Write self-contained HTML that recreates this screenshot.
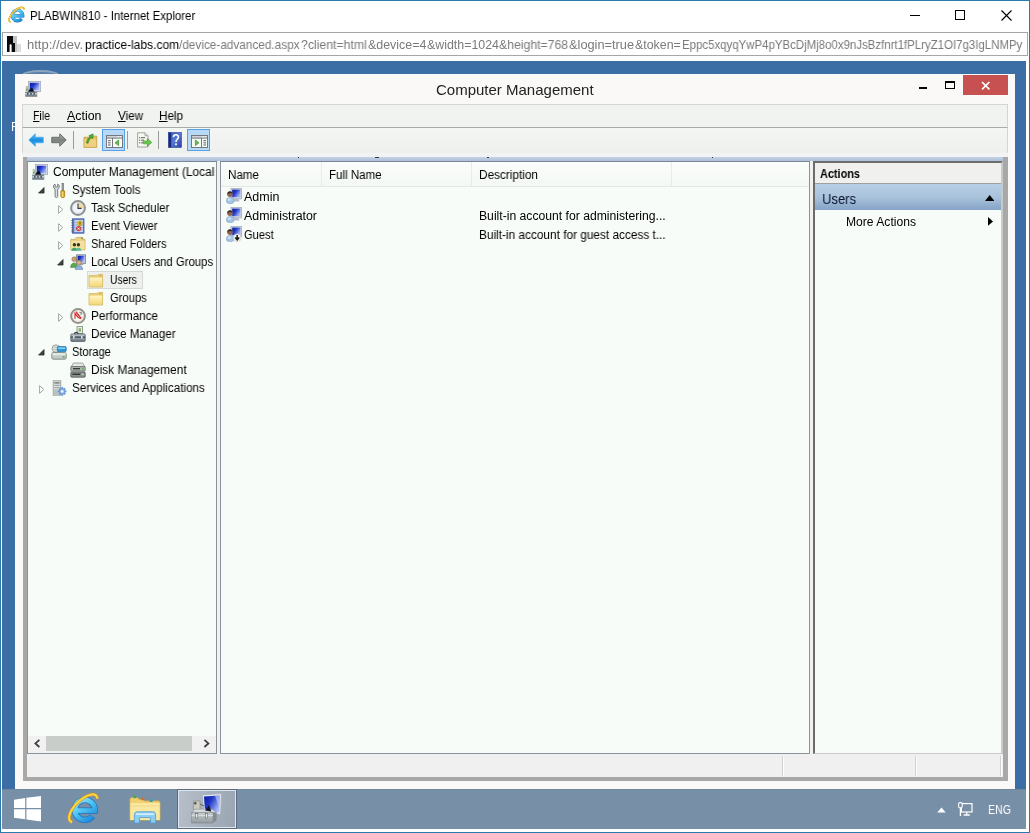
<!DOCTYPE html>
<html lang="en">
<head>
<meta charset="utf-8">
<title>PLABWIN810 - Internet Explorer</title>
<style>
*{box-sizing:border-box;margin:0;padding:0}
html,body{width:1030px;height:833px;overflow:hidden;background:#fff}
body{position:relative;font-family:"Liberation Sans",sans-serif;font-size:12px;color:#000}
.abs{position:absolute;display:block}
.t{position:absolute;white-space:nowrap;line-height:16px;height:16px;transform-origin:0 50%;will-change:transform}
</style>
</head>
<body>
<svg width="0" height="0" style="position:absolute"><defs><linearGradient id="gscr" x1="0" y1="0" x2="1" y2="0.6"><stop offset="0" stop-color="#0a1a9c"/><stop offset="0.45" stop-color="#2038c8"/><stop offset="1" stop-color="#a8b8f8"/></linearGradient>
<linearGradient id="gfold" x1="0" y1="0" x2="0" y2="1"><stop offset="0" stop-color="#fff4c4"/><stop offset="1" stop-color="#f4d878"/></linearGradient>
<linearGradient id="gback" x1="0" y1="0" x2="0" y2="1"><stop offset="0" stop-color="#6cc0f4"/><stop offset="0.5" stop-color="#1c8ee0"/><stop offset="1" stop-color="#3aa8ee"/></linearGradient>
<linearGradient id="gfwd" x1="0" y1="0" x2="0" y2="1"><stop offset="0" stop-color="#b4b8b4"/><stop offset="0.5" stop-color="#7c807c"/><stop offset="1" stop-color="#a0a4a0"/></linearGradient>
<linearGradient id="gbox" x1="0" y1="0" x2="0" y2="1"><stop offset="0" stop-color="#c8d0d4"/><stop offset="1" stop-color="#6c7880"/></linearGradient>
<linearGradient id="gbox2" x1="0" y1="0" x2="0" y2="1"><stop offset="0" stop-color="#c8ced2"/><stop offset="1" stop-color="#949ca0"/></linearGradient>
<linearGradient id="ghelp" x1="0" y1="0" x2="1" y2="1"><stop offset="0" stop-color="#3858c0"/><stop offset="0.5" stop-color="#5878d4"/><stop offset="1" stop-color="#2840a0"/></linearGradient>
<radialGradient id="gie" cx="0.4" cy="0.35" r="0.8"><stop offset="0" stop-color="#7fe0ff"/><stop offset="0.6" stop-color="#1fa0e8"/><stop offset="1" stop-color="#1070c0"/></radialGradient>
<linearGradient id="gie2" gradientUnits="userSpaceOnUse" x1="8" y1="6" x2="26" y2="30"><stop offset="0" stop-color="#a0f0ff"/><stop offset="0.5" stop-color="#48c0f0"/><stop offset="1" stop-color="#1880d8"/></linearGradient>
<linearGradient id="gusers" x1="0" y1="0" x2="0" y2="1"><stop offset="0" stop-color="#b8d0e8"/><stop offset="0.5" stop-color="#a0bcdc"/><stop offset="1" stop-color="#80a0c8"/></linearGradient></defs></svg>
<div class="abs" style="left:0px;top:0px;width:1030px;height:833px;border:1px solid #2b7aae"></div>
<svg class="abs" style="left:7.6px;top:6.3px" width="17" height="17" viewBox="0 0 32 32"><g fill="none" stroke-linecap="butt">
<path d="M25.6 24.2 A10 10 0 1 1 27.8 18.7 H10" stroke="#1c74c0" stroke-width="6.2"/>
<path d="M25.6 24.2 A10 10 0 1 1 27.8 18.7 H10" stroke="url(#gie2)" stroke-width="4.8"/>
<path d="M5.14 30.22 A18.2 8.0 -44.6 1 1 30.32 6.69" stroke="#d8a020" stroke-width="3.2"/>
<path d="M5.14 30.22 A18.2 8.0 -44.6 1 1 30.32 6.69" stroke="#fcd848" stroke-width="1.8"/>
</g></svg>
<div class="t" style="left:30.4px;top:7.84px;font-size:12px;color:#000;transform:scaleX(0.9526)">PLABWIN810 - Internet Explorer</div>
<div class="abs" style="left:910px;top:15px;width:10px;height:1px;background:#000"></div>
<div class="abs" style="left:955px;top:10px;width:10px;height:10px;border:1px solid #000"></div>
<svg class="abs" style="left:1001px;top:10px" width="11" height="11" viewBox="0 0 11 11"><path d="M0.5 0.5 L10.5 10.5 M10.5 0.5 L0.5 10.5" stroke="#000" stroke-width="1.1"/></svg>
<div class="abs" style="left:2px;top:32px;width:1026px;height:24px;border:1px solid #a6a6a6;background:#fff"></div>
<svg class="abs" style="left:7px;top:36px" width="14" height="16" viewBox="0 0 14 16"><rect x="0" y="0" width="6" height="16" fill="#0a0a0a"/><rect x="6" y="0" width="4" height="16" fill="#c4c4c4"/><rect x="10" y="8" width="4" height="8" fill="#dcdcdc"/>
<rect x="4" y="7" width="4" height="9" fill="#0a0a0a"/><path d="M2.6 16 V9.4 C2.6 8 4.6 8 4.6 9.4 V16z" fill="#fff"/></svg>
<div class="t" style="left:27.4px;top:37.10px;font-size:12.4px;color:#7a7a7a;transform:scaleX(1.0505)">http://dev.</div>
<div class="t" style="left:84.5px;top:37.10px;font-size:12.4px;color:#000;transform:scaleX(0.9692)">practice-labs.com</div>
<div class="t" style="left:179.2px;top:37.10px;font-size:12.4px;color:#7a7a7a;transform:scaleX(0.9515)">/device-advanced.aspx</div>
<div class="t" style="left:301px;top:37.10px;font-size:12.4px;color:#7a7a7a;transform:scaleX(0.9899)">?client=html</div>
<div class="t" style="left:367.6px;top:37.10px;font-size:12.4px;color:#7a7a7a;transform:scaleX(1.0031)">&amp;device=4</div>
<div class="t" style="left:426.6px;top:37.10px;font-size:12.4px;color:#7a7a7a;transform:scaleX(1.0000)">&amp;width=1024</div>
<div class="t" style="left:499.3px;top:37.10px;font-size:12.4px;color:#7a7a7a;transform:scaleX(0.9880)">&amp;height=768</div>
<div class="t" style="left:569.1px;top:37.10px;font-size:12.4px;color:#7a7a7a;transform:scaleX(1.0328)">&amp;login=true</div>
<div class="t" style="left:634.8px;top:37.10px;font-size:12.4px;color:#7a7a7a;transform:scaleX(0.9997)">&amp;token=</div>
<div class="t" style="left:681.7px;top:37.10px;font-size:12.4px;color:#7a7a7a;transform:scaleX(0.9236)">Eppc5xqyqYwP4pYBcDjMj8o0x9nJsBzfnrt1fPLryZ1OI7g3IgLNMPy</div>
<div class="abs" style="left:2px;top:61px;width:1024px;height:728px;background:#3a6ea5"></div>
<div class="abs" style="left:22px;top:69.5px;width:37px;height:10px;border:2px solid #8ea4bc;border-radius:50%;background:#5a7fa8"></div>
<div class="abs" style="left:2px;top:117.5px;width:13px;height:18px;overflow:hidden"><span class="t" style="left:9px;top:1px;color:#fff;font-size:12px">R</span></div>
<div class="abs" style="left:2px;top:789px;width:1024px;height:40px;background:#788fa8;border-top:1px solid #70869e"></div>
<svg class="abs" style="left:13.5px;top:796px" width="27" height="25.5" viewBox="0 0 27 25.4"><path d="M0 3.6 L11.2 2 V12 H0z M12.4 1.8 L27 0 V12 H12.4z M0 13.2 H11.2 V23.2 L0 21.6z M12.4 13.2 H27 V25.4 L12.4 23.4z" fill="#fff"/></svg>
<svg class="abs" style="left:67px;top:792px" width="32" height="32" viewBox="0 0 32 32"><g fill="none" stroke-linecap="butt">
<path d="M25.6 24.2 A10 10 0 1 1 27.8 18.7 H10" stroke="#1c74c0" stroke-width="6.2"/>
<path d="M25.6 24.2 A10 10 0 1 1 27.8 18.7 H10" stroke="url(#gie2)" stroke-width="4.8"/>
<path d="M5.14 30.22 A18.2 8.0 -44.6 1 1 30.32 6.69" stroke="#d8a020" stroke-width="3.2"/>
<path d="M5.14 30.22 A18.2 8.0 -44.6 1 1 30.32 6.69" stroke="#fcd848" stroke-width="1.8"/>
</g></svg>
<svg class="abs" style="left:129px;top:794px" width="32" height="30" viewBox="0 0 32 30"><path d="M1 5.6 C1 4.4 2 3.6 3 3.6 H8.6 L10 5.4 H14 L15.4 7 H29 C30.4 7 31 7.8 31 9 V26 H1z" fill="#f0d070" stroke="#d8b048" stroke-width="0.8"/>
<rect x="4.4" y="1.6" width="3" height="2.6" fill="#48a848"/><rect x="12.4" y="3.6" width="3" height="2.6" fill="#d87028"/><rect x="20.6" y="5.4" width="3" height="2.6" fill="#38a0a8"/>
<path d="M1.4 9 H30.6 V26 H1.4z" fill="#f8e8a0"/>
<path d="M1.4 12 H30.6" stroke="#f0d888" stroke-width="1"/>
<path d="M5.4 29 V20.6 C5.4 18.6 6.6 17.8 8.4 17.8 H23.8 C25.6 17.8 26.6 18.8 26.6 20.6 V29 H21.6 V23.6 H10.4 V29z" fill="#8ccdf2" stroke="#58a0d4" stroke-width="0.9"/>
<path d="M7 19.2 H25 V21 H7z" fill="#d0ecfc"/></svg>
<div class="abs" style="left:178px;top:790px;width:58px;height:38px;background:linear-gradient(100deg,#b6bfca,#a2acb9 70%,#9aa5b3);border:1px solid #dfe5ec;box-shadow:0 0 0 1px #5d6b7d"></div>
<svg class="abs" style="left:191px;top:793px" width="31" height="31" viewBox="0 0 31 31"><path d="M11.4 1.8 L30.6 0.6 L29.6 21.6 L12.6 19.2z" fill="#e0e4ee" stroke="#a4acbc" stroke-width="0.8"/>
<path d="M13 3.4 L29 2.4 L28.2 19.6 L14 17.6z" fill="url(#gscr)"/>
<path d="M24 3 L29 2.6 L28.4 15 z" fill="#c8d4fc" opacity="0.55"/>
<path d="M2.4 8 H9 V16.6 H2.4z" fill="#ccccbc" stroke="#8c8c7c" stroke-width="0.7"/><rect x="3" y="9" width="2.6" height="2.6" rx="1" fill="#505860"/>
<path d="M9 11 L13 13" stroke="#606060" stroke-width="1"/>
<path d="M0.6 19.4 L4.2 16.2 H21 L25.6 19.4z" fill="#dce0e4" stroke="#8c9498" stroke-width="0.6"/>
<path d="M0.6 19.4 H22 V30 H0.6z" fill="url(#gbox2)" stroke="#7c8488" stroke-width="0.6"/>
<path d="M22 19.4 H25.6 V27.2 L22 30z" fill="#848c90"/>
<path d="M0.6 22.6 H22" stroke="#e0e4e8" stroke-width="0.9"/>
<rect x="4.6" y="20.6" width="2.2" height="4.4" fill="#f0f4f4" stroke="#484c50" stroke-width="0.5"/><rect x="14.4" y="20.6" width="2.2" height="4.4" fill="#f0f4f4" stroke="#484c50" stroke-width="0.5"/>
<path d="M14 17.6 L18 12 L20.4 18.4z" fill="#101828"/></svg>
<svg class="abs" style="left:937px;top:806.5px" width="9" height="6" viewBox="0 0 8.4 6"><path d="M0 5.4 L4.2 0.6 L8.4 5.4z" fill="#fff"/></svg>
<svg class="abs" style="left:958px;top:802px" width="16" height="15" viewBox="0 0 16 15"><rect x="3.4" y="1.6" width="10.6" height="8.4" fill="none" stroke="#fff" stroke-width="1.2"/>
<path d="M5.6 13 H11.8 M8.7 10 V13" stroke="#fff" stroke-width="1.3" fill="none"/>
<rect x="0.6" y="0.6" width="3.6" height="5.2" rx="1.4" fill="#778da7" stroke="#fff" stroke-width="1.1"/>
<path d="M2.4 5.8 V14" stroke="#fff" stroke-width="1.3"/></svg>
<div class="t" style="left:987.8px;top:802.34px;font-size:12px;color:#fff;transform:scaleX(0.8841)">ENG</div>
<div class="abs" style="left:15px;top:74px;width:1000px;height:715px;background:#faf9f8"></div>
<svg class="abs" style="left:25px;top:81px" width="16" height="16" viewBox="0 0 16 16"><rect x="3.4" y="0.5" width="12.2" height="10" fill="#d0d8e4" stroke="#a4acbc" stroke-width="0.8"/>
<rect x="4.8" y="1.8" width="9.4" height="7.4" fill="url(#gscr)"/>
<path d="M3 11 C4 8.4 6 6.4 7.4 7 L9.4 11z" fill="#0c1020"/>
<rect x="0.8" y="5.4" width="2" height="4.4" fill="#789c70"/><rect x="1.2" y="6" width="1" height="1.6" fill="#d8e8d0"/>
<rect x="0.2" y="10.6" width="12" height="5.2" fill="#76848e"/>
<rect x="0.2" y="12" width="12" height="1.5" fill="#ccd4d8"/>
<rect x="2" y="11.8" width="1.6" height="2" fill="#4c5860"/><rect x="5.2" y="11.8" width="1.6" height="2" fill="#4c5860"/><rect x="8.4" y="11.8" width="1.6" height="2" fill="#4c5860"/></svg>
<div class="t" style="left:436.4px;top:81.80px;font-size:15px;color:#222;transform:scaleX(1.0000)">Computer Management</div>
<div class="abs" style="left:919px;top:87px;width:8px;height:2px;background:#000"></div>
<div class="abs" style="left:945px;top:81px;width:10px;height:8px;border:1px solid #000;border-top-width:2px"></div>
<div class="abs" style="left:963px;top:75px;width:45px;height:20px;background:#c75050"></div>
<svg class="abs" style="left:981px;top:80.5px" width="9.4" height="9.4" viewBox="0 0 9.4 9.4"><path d="M1 1 L8.4 8.4 M8.4 1 L1 8.4" stroke="#fff" stroke-width="1.7"/></svg>
<div class="abs" style="left:22px;top:104px;width:986px;height:24px;background:#f0f3f0;border:1px solid #d4d6d4;border-bottom:1px solid #a8aaa8"></div>
<div class="t" style="left:33.4px;top:107.84px;font-size:12px;color:#000;transform:scaleX(0.8788)"><span style="text-decoration:underline;text-underline-offset:0.5px">F</span>ile</div>
<div class="t" style="left:67px;top:107.84px;font-size:12px;color:#000;transform:scaleX(1.0312)"><span style="text-decoration:underline;text-underline-offset:0.5px">A</span>ction</div>
<div class="t" style="left:118px;top:107.84px;font-size:12px;color:#000;transform:scaleX(0.9691)"><span style="text-decoration:underline;text-underline-offset:0.5px">V</span>iew</div>
<div class="t" style="left:159.4px;top:107.84px;font-size:12px;color:#000;transform:scaleX(0.9722)"><span style="text-decoration:underline;text-underline-offset:0.5px">H</span>elp</div>
<div class="abs" style="left:22px;top:128px;width:986px;height:25px;background:linear-gradient(#f4f6f4,#eef0ee);border-left:1px solid #d4d6d4;border-right:1px solid #d4d6d4"></div>
<div class="abs" style="left:22px;top:153px;width:986px;height:4px;background:#f2f3f2"></div>
<svg class="abs" style="left:28px;top:133px" width="16" height="14" viewBox="0 0 16 14"><path d="M0.8 7 L7.2 0.8 V4.3 H15.2 V9.7 H7.2 V13.2z" fill="url(#gback)" stroke="#48b0f0" stroke-width="1" stroke-linejoin="round"/></svg>
<svg class="abs" style="left:51px;top:133px" width="16" height="14" viewBox="0 0 16 14"><path d="M15.2 7 L8.8 0.8 V4.3 H0.8 V9.7 H8.8 V13.2z" fill="url(#gfwd)" stroke="#686c68" stroke-width="1" stroke-linejoin="round"/></svg>
<div class="abs" style="left:73px;top:131px;width:1px;height:18px;background:#9a9c9a"></div>
<svg class="abs" style="left:83px;top:132.6px" width="15" height="16" viewBox="0 0 16 16"><path d="M1 4 H9.4 L10.4 2.8 H14.6 V14.8 H1z" fill="#e4c060" stroke="#b89838" stroke-width="0.8"/>
<path d="M1.6 6.2 H14 V14.2 H1.6z" fill="#f0d080"/>
<path d="M3.6 10 C4.4 6 6.4 4 7.6 3.6 L6.2 2.4 L10.8 0.4 L10.4 5.4 L9 4.6 C7.6 5.4 6 7.4 5.4 10.4z" fill="#48b038" stroke="#287818" stroke-width="0.6"/></svg>
<div class="abs" style="left:102px;top:129px;width:23px;height:22px;background:#b8d8f8;border:1px solid #58a0e8"></div>
<svg class="abs" style="left:105.5px;top:134.8px" width="17" height="13" viewBox="0 0 17 13"><rect x="0.5" y="0.5" width="16" height="12" fill="#f8fcf8" stroke="#74787c"/>
<rect x="0.5" y="0.5" width="16" height="2.6" fill="#d0d4d8" stroke="#74787c"/>
<rect x="11.4" y="1.3" width="1.4" height="1" fill="#f8fcf8"/><rect x="13.8" y="1.3" width="1.4" height="1" fill="#f8fcf8"/>
<path d="M6.5 3 V12.5" stroke="#74787c"/>
<rect x="2" y="5" width="2.6" height="1.2" fill="#74787c"/><rect x="2" y="7.2" width="2.6" height="1.2" fill="#74787c"/><rect x="2" y="9.4" width="2.6" height="1.2" fill="#74787c"/>
<path d="M9 7.8 L12.6 5 V10.6z" fill="#70b858" stroke="#489830" stroke-width="0.8"/></svg>
<div class="abs" style="left:127px;top:131px;width:1px;height:18px;background:#9a9c9a"></div>
<svg class="abs" style="left:136px;top:132px" width="16" height="16" viewBox="0 0 16 16"><path d="M1.6 0.8 H9 L12 3.8 V15 H1.6z" fill="#f8f8f0" stroke="#8c9088" stroke-width="0.8"/>
<path d="M9 0.8 V3.8 H12" fill="#d8dcd4" stroke="#8c9088" stroke-width="0.7"/>
<g fill="#707870"><rect x="3" y="5" width="1.2" height="1.2"/><rect x="5" y="5" width="4" height="1.2"/><rect x="3" y="7.6" width="1.2" height="1.2"/><rect x="5" y="7.6" width="3" height="1.2"/><rect x="3" y="10.2" width="1.2" height="1.2"/><rect x="5" y="10.2" width="2.4" height="1.2"/></g>
<path d="M7.4 9 H11.4 V6.6 L15.8 10.4 L11.4 14.2 V11.8 H7.4z" fill="#68c850" stroke="#48a030" stroke-width="0.7"/></svg>
<div class="abs" style="left:158px;top:131px;width:1px;height:18px;background:#9a9c9a"></div>
<svg class="abs" style="left:166.6px;top:132px" width="16" height="16" viewBox="0 0 16 16"><rect x="1.6" y="0.6" width="12.8" height="14.8" fill="url(#ghelp)" stroke="#283890" stroke-width="0.6"/>
<rect x="1.6" y="0.6" width="2.6" height="14.8" fill="#182878"/>
<path d="M6.4 5.2 C6.4 2 11.4 2 11.4 5 C11.4 7.2 9 7.4 9 10" fill="none" stroke="#fff" stroke-width="1.6"/><rect x="8.1" y="11.4" width="1.8" height="1.8" fill="#fff"/></svg>
<div class="abs" style="left:187px;top:129px;width:23px;height:22px;background:#b8d8f8;border:1px solid #58a0e8"></div>
<svg class="abs" style="left:190.5px;top:134.8px" width="17" height="13" viewBox="0 0 17 13"><rect x="0.5" y="0.5" width="16" height="12" fill="#f8fcf8" stroke="#74787c"/>
<rect x="0.5" y="0.5" width="16" height="2.6" fill="#d0d4d8" stroke="#74787c"/>
<rect x="11.4" y="1.3" width="1.4" height="1" fill="#f8fcf8"/><rect x="13.8" y="1.3" width="1.4" height="1" fill="#f8fcf8"/>
<path d="M10.5 3 V12.5" stroke="#74787c"/>
<rect x="12.4" y="5" width="2.6" height="1.2" fill="#74787c"/><rect x="12.4" y="7.2" width="2.6" height="1.2" fill="#74787c"/><rect x="12.4" y="9.4" width="2.6" height="1.2" fill="#74787c"/>
<path d="M8 7.8 L4.4 5 V10.6z" fill="#70b858" stroke="#489830" stroke-width="0.8"/></svg>
<div class="abs" style="left:23px;top:157px;width:985px;height:624px;background:#a8a8a8"></div>
<div class="abs" style="left:27px;top:157px;width:976px;height:4px;background:linear-gradient(#c4d2e6,#aec0d8)"></div>
<div class="abs" style="left:298px;top:157px;width:1.4px;height:1px;background:#30363c"></div>
<div class="abs" style="left:375px;top:157px;width:4px;height:1px;background:#30363c"></div>
<div class="abs" style="left:487px;top:157px;width:2.4px;height:1px;background:#30363c"></div>
<div class="abs" style="left:712px;top:157px;width:1.4px;height:1px;background:#30363c"></div>
<div class="abs" style="left:27px;top:161px;width:976px;height:616px;background:#f0f1f0"></div>
<div class="abs" style="left:27px;top:161px;width:190px;height:593px;background:#f8fcf8;border:1px solid #8c929a;border-top-color:#7a869a"></div>
<div class="abs" style="left:87px;top:271px;width:55.5px;height:18px;background:#eef0ee;border:1px solid #d6dad6"></div>
<svg class="abs" style="left:32px;top:163.8px" width="16" height="16" viewBox="0 0 16 16"><rect x="3.4" y="0.5" width="12.2" height="10" fill="#d0d8e4" stroke="#a4acbc" stroke-width="0.8"/>
<rect x="4.8" y="1.8" width="9.4" height="7.4" fill="url(#gscr)"/>
<path d="M3 11 C4 8.4 6 6.4 7.4 7 L9.4 11z" fill="#0c1020"/>
<rect x="0.8" y="5.4" width="2" height="4.4" fill="#789c70"/><rect x="1.2" y="6" width="1" height="1.6" fill="#d8e8d0"/>
<rect x="0.2" y="10.6" width="12" height="5.2" fill="#76848e"/>
<rect x="0.2" y="12" width="12" height="1.5" fill="#ccd4d8"/>
<rect x="2" y="11.8" width="1.6" height="2" fill="#4c5860"/><rect x="5.2" y="11.8" width="1.6" height="2" fill="#4c5860"/><rect x="8.4" y="11.8" width="1.6" height="2" fill="#4c5860"/></svg>
<div class="t" style="left:53.1px;top:163.84px;font-size:12px;color:#000;transform:scaleX(0.9957)">Computer Management (Local</div>
<svg class="abs" style="left:51px;top:181.8px" width="16" height="16" viewBox="0 0 16 16"><g transform="translate(0.9 0.9)"><path d="M3.2 1.2 C1.6 1.8 1 3.6 2 5 L3.2 6.2 V13.6 C3.2 15 5.8 15 5.8 13.6 V6.2 L7 5 C8 3.6 7.4 1.8 5.8 1.2 V4 H3.2z" fill="#dcdfe2" stroke="#767a82" stroke-width="1"/>
<rect x="10.1" y="0.4" width="1.5" height="7.6" fill="#a4a8ac" stroke="#60646c" stroke-width="0.6"/>
<path d="M9 8 H12.7 V13.6 C12.7 15.4 9 15.4 9 13.6z" fill="#f0b41c" stroke="#a87408" stroke-width="0.8"/>
<rect x="10" y="8.6" width="0.9" height="5.4" fill="#fce080"/></g></svg>
<svg class="abs" style="left:38px;top:187.4px" width="6.6" height="6.6" viewBox="0 0 7.2 7.2"><path d="M6.6 0.6 V6.6 H0.6z" fill="#404040" stroke="#262626" stroke-width="0.8"/></svg>
<div class="t" style="left:72.1px;top:181.84px;font-size:12px;color:#000;transform:scaleX(0.9615)">System Tools</div>
<svg class="abs" style="left:69.8px;top:199.8px" width="16" height="16" viewBox="0 0 16 16"><circle cx="8" cy="8" r="6.9" fill="#f0f4fa" stroke="#8c9090" stroke-width="2"/>
<path d="M8 8 V2.6 A5.4 5.4 0 0 1 13.4 8z" fill="#f4dc9c"/>
<circle cx="8" cy="8" r="5.6" fill="none" stroke="#c8d0d8" stroke-width="0.7"/>
<path d="M8 3.6 V8.4 H11.6" fill="none" stroke="#303840" stroke-width="1.1"/></svg>
<svg class="abs" style="left:58px;top:204.6px" width="6" height="9" viewBox="0 0 6 9"><path d="M0.6 0.7 L4.8 4.5 L0.6 8.3z" fill="#fff" stroke="#a0a4a0" stroke-width="1"/></svg>
<div class="t" style="left:90.9px;top:199.84px;font-size:12px;color:#000;transform:scaleX(0.9556)">Task Scheduler</div>
<svg class="abs" style="left:69.8px;top:217.8px" width="16" height="16" viewBox="0 0 16 16"><rect x="2.5" y="0.8" width="11.5" height="14.4" fill="#6484c8" stroke="#4860a8" stroke-width="0.8"/>
<rect x="4.4" y="2" width="8.6" height="12" fill="#c8d4f0"/>
<g stroke="#8ca0d0" stroke-width="0.7"><path d="M4.4 4.5h8.6M4.4 7h8.6M4.4 9.5h8.6M4.4 12h8.6"/></g>
<g fill="#505878"><rect x="1.4" y="2" width="2" height="1"/><rect x="1.4" y="4.4" width="2" height="1"/><rect x="1.4" y="6.8" width="2" height="1"/><rect x="1.4" y="9.2" width="2" height="1"/><rect x="1.4" y="11.6" width="2" height="1"/><rect x="1.4" y="13.4" width="2" height="1"/></g>
<circle cx="10" cy="5.4" r="2.4" fill="#f4cc20" stroke="#b08c08" stroke-width="0.5"/><rect x="9.55" y="3.8" width="0.9" height="2.2" fill="#302808"/><rect x="9.55" y="6.4" width="0.9" height="0.8" fill="#302808"/>
<circle cx="8.6" cy="10.6" r="2.3" fill="#e04848" stroke="#a82020" stroke-width="0.5"/><path d="M7.6 9.6 L9.6 11.6 M9.6 9.6 L7.6 11.6" stroke="#fff" stroke-width="0.9"/></svg>
<svg class="abs" style="left:58px;top:222.6px" width="6" height="9" viewBox="0 0 6 9"><path d="M0.6 0.7 L4.8 4.5 L0.6 8.3z" fill="#fff" stroke="#a0a4a0" stroke-width="1"/></svg>
<div class="t" style="left:90.9px;top:217.84px;font-size:12px;color:#000;transform:scaleX(0.9449)">Event Viewer</div>
<svg class="abs" style="left:69.8px;top:235.8px" width="16" height="16" viewBox="0 0 16 16"><path d="M0.8 3.4 H5 L6.4 1.4 H12.8 V3.4 H15 V13.8 H0.8z" fill="#ecd088" stroke="#c0a048" stroke-width="0.7"/>
<rect x="11" y="1.6" width="1.6" height="1.4" fill="#70a060"/>
<path d="M1.2 5 H14.6 V13.4 H1.2z" fill="#f4e0a0"/>
<circle cx="4.4" cy="8.8" r="1.7" fill="#30381c"/><path d="M1.4 14.8 C1.4 10.8 7.4 10.8 7.4 14.8z" fill="#40a070"/>
<circle cx="8.4" cy="8.8" r="1.7" fill="#30381c"/><path d="M5.6 14.8 C5.6 10.8 11.4 10.8 11.4 14.8z" fill="#5cb890"/></svg>
<svg class="abs" style="left:58px;top:240.6px" width="6" height="9" viewBox="0 0 6 9"><path d="M0.6 0.7 L4.8 4.5 L0.6 8.3z" fill="#fff" stroke="#a0a4a0" stroke-width="1"/></svg>
<div class="t" style="left:90.9px;top:235.84px;font-size:12px;color:#000;transform:scaleX(0.9214)">Shared Folders</div>
<svg class="abs" style="left:69.8px;top:253.8px" width="16" height="16" viewBox="0 0 16 16"><rect x="6.5" y="0.8" width="9" height="8.6" fill="#c4ccdc" stroke="#8c94a4"/>
<rect x="7.6" y="1.8" width="6.8" height="6.4" fill="url(#gscr)"/>
<rect x="9.4" y="9.6" width="4" height="1.6" fill="#a0a8b4"/>
<circle cx="4.2" cy="5.2" r="2.4" fill="#c8a070" stroke="#8c6840" stroke-width="0.5"/>
<path d="M0.6 13.4 C0.6 7.4 7.8 7.4 7.8 13.4z" fill="#58a850" stroke="#387830" stroke-width="0.5"/>
<circle cx="9" cy="8.6" r="2.3" fill="#d8b088" stroke="#8c6840" stroke-width="0.5"/>
<path d="M5.2 15.6 C5.2 10.2 12.8 10.2 12.8 15.6z" fill="#90b0d8" stroke="#5878a8" stroke-width="0.5"/></svg>
<svg class="abs" style="left:57px;top:259.4px" width="6.6" height="6.6" viewBox="0 0 7.2 7.2"><path d="M6.6 0.6 V6.6 H0.6z" fill="#404040" stroke="#262626" stroke-width="0.8"/></svg>
<div class="t" style="left:90.9px;top:253.84px;font-size:12px;color:#000;transform:scaleX(0.9428)">Local Users and Groups</div>
<svg class="abs" style="left:88.2px;top:271.8px" width="16" height="16" viewBox="0 0 16 16"><path d="M1 3.6 H9.2 L10.2 2.4 H14.6 V15 H1z" fill="#ecd078" stroke="#d4b860" stroke-width="0.8"/>
<path d="M1.6 5.6 H14 V14.4 H1.6z" fill="url(#gfold)"/>
<rect x="11" y="3.2" width="2.6" height="1.4" fill="#d8b858"/></svg>
<div class="t" style="left:110.1px;top:271.84px;font-size:12px;color:#000;transform:scaleX(0.8550)">Users</div>
<svg class="abs" style="left:88.2px;top:289.8px" width="16" height="16" viewBox="0 0 16 16"><path d="M1 3.6 H9.2 L10.2 2.4 H14.6 V15 H1z" fill="#ecd078" stroke="#d4b860" stroke-width="0.8"/>
<path d="M1.6 5.6 H14 V14.4 H1.6z" fill="url(#gfold)"/>
<rect x="11" y="3.2" width="2.6" height="1.4" fill="#d8b858"/></svg>
<div class="t" style="left:110.1px;top:289.84px;font-size:12px;color:#000;transform:scaleX(0.9350)">Groups</div>
<svg class="abs" style="left:69.8px;top:307.8px" width="16" height="16" viewBox="0 0 16 16"><circle cx="8" cy="8" r="6.9" fill="#f8f8f4" stroke="#94908c" stroke-width="2"/>
<circle cx="8" cy="8" r="5.4" fill="none" stroke="#dcd8d4" stroke-width="0.7"/>
<path d="M5 10.8 V5.4 L8 9.2 L11 10.8" fill="none" stroke="#d02828" stroke-width="1.1"/>
<path d="M6 3.8 L11.2 10.4" stroke="#e03030" stroke-width="1.4"/>
<path d="M9.4 4.4 L11.6 4.8 L10.8 7" fill="none" stroke="#585858" stroke-width="0.8"/></svg>
<svg class="abs" style="left:58px;top:312.6px" width="6" height="9" viewBox="0 0 6 9"><path d="M0.6 0.7 L4.8 4.5 L0.6 8.3z" fill="#fff" stroke="#a0a4a0" stroke-width="1"/></svg>
<div class="t" style="left:90.9px;top:307.84px;font-size:12px;color:#000;transform:scaleX(0.9752)">Performance</div>
<svg class="abs" style="left:69.8px;top:325.8px" width="16" height="16" viewBox="0 0 16 16"><rect x="7" y="0.6" width="5.6" height="7" fill="#e8f0e0" stroke="#788870" stroke-width="0.8"/>
<rect x="8.6" y="2.2" width="2.4" height="3.4" fill="#88b070"/>
<path d="M4.4 8.4 C4.4 5.6 8.2 5.6 8.2 8.4" fill="none" stroke="#404848" stroke-width="1.2"/>
<rect x="0.8" y="8" width="14.4" height="7.4" rx="0.8" fill="url(#gbox)" stroke="#505c64" stroke-width="0.8"/>
<rect x="0.8" y="10.4" width="14.4" height="1.4" fill="#404c54"/>
<rect x="3" y="9.8" width="1.6" height="2.6" fill="#d8e0e4"/><rect x="11" y="9.8" width="1.6" height="2.6" fill="#d8e0e4"/></svg>
<div class="t" style="left:90.9px;top:325.84px;font-size:12px;color:#000;transform:scaleX(0.9682)">Device Manager</div>
<svg class="abs" style="left:51px;top:343.8px" width="16" height="16" viewBox="0 0 16 16"><ellipse cx="5" cy="4.6" rx="4" ry="3.8" fill="#d4dcd8" stroke="#8c9890" stroke-width="0.8"/>
<circle cx="5" cy="4.6" r="1.2" fill="#f8fcf8" stroke="#8c9890" stroke-width="0.5"/>
<rect x="6.4" y="2.6" width="8.8" height="5" rx="1" fill="#2898d8" stroke="#1868a8" stroke-width="0.7"/>
<rect x="7.2" y="3.4" width="7.2" height="1.6" fill="#88d0f4"/>
<rect x="0.8" y="8.6" width="14.4" height="6.6" rx="1.4" fill="#c4ccc8" stroke="#6c7870" stroke-width="0.8"/>
<rect x="1.4" y="9.2" width="13.2" height="2" fill="#e8ece8"/>
<rect x="11.6" y="12" width="2" height="1.6" fill="#58b048"/></svg>
<svg class="abs" style="left:38px;top:349.4px" width="6.6" height="6.6" viewBox="0 0 7.2 7.2"><path d="M6.6 0.6 V6.6 H0.6z" fill="#404040" stroke="#262626" stroke-width="0.8"/></svg>
<div class="t" style="left:72.1px;top:343.84px;font-size:12px;color:#000;transform:scaleX(0.9231)">Storage</div>
<svg class="abs" style="left:69.8px;top:361.8px" width="16" height="16" viewBox="0 0 16 16"><path d="M3.4 1 H12.6 L15 5 H1z" fill="#e4e8e4" stroke="#7c847c" stroke-width="0.7"/>
<rect x="0.8" y="4.6" width="14.4" height="4.4" rx="0.8" fill="#b0b8b4" stroke="#5c645c" stroke-width="0.8"/>
<rect x="3" y="6" width="7" height="1.4" fill="#383c38"/><rect x="11.8" y="6" width="1.8" height="1.4" fill="#58b048"/>
<rect x="0.8" y="10" width="14.4" height="5.2" rx="0.8" fill="#8c9490" stroke="#4c544c" stroke-width="0.8"/>
<rect x="2.4" y="11.6" width="8" height="1.4" fill="#303430"/><rect x="11.8" y="11.6" width="1.8" height="1.4" fill="#d0d4d0"/></svg>
<div class="t" style="left:90.9px;top:361.84px;font-size:12px;color:#000;transform:scaleX(0.9884)">Disk Management</div>
<svg class="abs" style="left:51px;top:379.8px" width="16" height="16" viewBox="0 0 16 16"><rect x="2.2" y="0.8" width="7.6" height="14.4" fill="#dce0e0" stroke="#8c9494" stroke-width="0.8"/>
<rect x="3.4" y="2.2" width="5.2" height="1.4" fill="#707878"/><rect x="3.4" y="4.8" width="5.2" height="1.2" fill="#a0a8a8"/><rect x="3.4" y="7" width="5.2" height="1.2" fill="#a0a8a8"/>
<rect x="2.8" y="9.4" width="6.4" height="5.2" fill="#b8c0c0"/>
<g transform="translate(11.2 11.4)"><g stroke="#6c9cd8" stroke-width="1.9" stroke-linecap="butt"><path d="M0 -4.3V4.3M-4.3 0H4.3M-3 -3L3 3M-3 3L3 -3"/></g><circle r="2.9" fill="#88b4e8" stroke="#5888c8" stroke-width="0.6"/><circle r="1.3" fill="#f0f4f8"/></g></svg>
<svg class="abs" style="left:39px;top:384.6px" width="6" height="9" viewBox="0 0 6 9"><path d="M0.6 0.7 L4.8 4.5 L0.6 8.3z" fill="#fff" stroke="#a0a4a0" stroke-width="1"/></svg>
<div class="t" style="left:72.1px;top:379.84px;font-size:12px;color:#000;transform:scaleX(0.9711)">Services and Applications</div>
<div class="abs" style="left:28px;top:736px;width:188px;height:17px;background:#f0f1f0"></div>
<div class="abs" style="left:46px;top:736px;width:146px;height:15px;background:#c9cdc9"></div>
<svg class="abs" style="left:33.5px;top:739px" width="7" height="9" viewBox="0 0 7 9"><path d="M5.4 0.8 L1.4 4.4 L5.4 8" fill="none" stroke="#404040" stroke-width="1.8"/></svg>
<svg class="abs" style="left:203px;top:739px" width="7" height="9" viewBox="0 0 7 9"><path d="M1.4 0.8 L5.4 4.4 L1.4 8" fill="none" stroke="#404040" stroke-width="1.8"/></svg>
<div class="abs" style="left:220px;top:161px;width:590px;height:593px;background:#f8fcf8;border:1px solid #8c929a;border-top-color:#7a869a"></div>
<div class="abs" style="left:221px;top:162px;width:588px;height:24px;background:linear-gradient(#fafdfa,#f4f8f4)"></div>
<div class="abs" style="left:221px;top:186px;width:588px;height:1px;background:#e4e8e4"></div>
<div class="abs" style="left:321px;top:162px;width:1px;height:24px;background:#e8ece8"></div>
<div class="abs" style="left:471px;top:162px;width:1px;height:24px;background:#e8ece8"></div>
<div class="abs" style="left:671px;top:162px;width:1px;height:24px;background:#e8ece8"></div>
<div class="t" style="left:228.4px;top:166.84px;font-size:12px;color:#000;transform:scaleX(0.9683)">Name</div>
<div class="t" style="left:328.6px;top:166.84px;font-size:12px;color:#000;transform:scaleX(0.9618)">Full Name</div>
<div class="t" style="left:478.7px;top:166.84px;font-size:12px;color:#000;transform:scaleX(0.9828)">Description</div>
<svg class="abs" style="left:226px;top:188px" width="16" height="16" viewBox="0 0 16 16"><rect x="5" y="0.5" width="10.5" height="10.4" fill="#ccd4e0" stroke="#a4acbc" stroke-width="0.8"/>
<rect x="6.2" y="1.6" width="8.2" height="7.6" fill="url(#gscr)"/>
<path d="M8.6 11 H12.4 L13.6 13.4 H7.6z" fill="#b4bcc8"/>
<circle cx="3.9" cy="6.2" r="2.7" fill="#8c6450"/>
<path d="M1.4 5.6 C1.8 2.6 6 2.6 6.6 5.6 C5.4 4.8 3 4.8 1.4 6.4z" fill="#38281c"/>
<ellipse cx="4.2" cy="12.6" rx="4" ry="3.2" fill="#a4c4e4" stroke="#7c9cc4" stroke-width="0.5"/>
<ellipse cx="3.4" cy="11.6" rx="1.8" ry="1.2" fill="#d0e4f8"/></svg>
<div class="t" style="left:244px;top:188.84px;font-size:12px;color:#000;transform:scaleX(1.0407)">Admin</div>
<svg class="abs" style="left:226px;top:207px" width="16" height="16" viewBox="0 0 16 16"><rect x="5" y="0.5" width="10.5" height="10.4" fill="#ccd4e0" stroke="#a4acbc" stroke-width="0.8"/>
<rect x="6.2" y="1.6" width="8.2" height="7.6" fill="url(#gscr)"/>
<path d="M8.6 11 H12.4 L13.6 13.4 H7.6z" fill="#b4bcc8"/>
<circle cx="3.9" cy="6.2" r="2.7" fill="#8c6450"/>
<path d="M1.4 5.6 C1.8 2.6 6 2.6 6.6 5.6 C5.4 4.8 3 4.8 1.4 6.4z" fill="#38281c"/>
<ellipse cx="4.2" cy="12.6" rx="4" ry="3.2" fill="#a4c4e4" stroke="#7c9cc4" stroke-width="0.5"/>
<ellipse cx="3.4" cy="11.6" rx="1.8" ry="1.2" fill="#d0e4f8"/></svg>
<div class="t" style="left:244px;top:207.84px;font-size:12px;color:#000;transform:scaleX(1.0327)">Administrator</div>
<svg class="abs" style="left:226px;top:226px" width="16" height="16" viewBox="0 0 16 16"><rect x="5" y="0.5" width="10.5" height="10.4" fill="#ccd4e0" stroke="#a4acbc" stroke-width="0.8"/>
<rect x="6.2" y="1.6" width="8.2" height="7.6" fill="url(#gscr)"/>
<path d="M8.6 11 H12.4 L13.6 13.4 H7.6z" fill="#b4bcc8"/>
<circle cx="3.9" cy="6.2" r="2.7" fill="#8c6450"/>
<path d="M1.4 5.6 C1.8 2.6 6 2.6 6.6 5.6 C5.4 4.8 3 4.8 1.4 6.4z" fill="#38281c"/>
<ellipse cx="4.2" cy="12.6" rx="4" ry="3.2" fill="#a4c4e4" stroke="#7c9cc4" stroke-width="0.5"/>
<ellipse cx="3.4" cy="11.6" rx="1.8" ry="1.2" fill="#d0e4f8"/><circle cx="11.2" cy="11.8" r="3.9" fill="#f4f4f4" stroke="#c8c8c8" stroke-width="0.6"/>
<path d="M11.2 9 V12.6 M9.2 11.4 L11.2 13.8 L13.2 11.4" fill="none" stroke="#181818" stroke-width="1.5"/></svg>
<div class="t" style="left:244.4px;top:226.84px;font-size:12px;color:#000;transform:scaleX(0.9245)">Guest</div>
<div class="t" style="left:478.7px;top:207.84px;font-size:12px;color:#000;transform:scaleX(1.0142)">Built-in account for administering...</div>
<div class="t" style="left:478.7px;top:226.84px;font-size:12px;color:#000;transform:scaleX(0.9856)">Built-in account for guest access t...</div>
<div class="abs" style="left:813px;top:161px;width:190px;height:593px;background:#f8fcf8;border:2px solid #6c6c6c;border-right:2px solid #c8cac8;border-bottom:1px solid #c8cac8"></div>
<div class="abs" style="left:815px;top:163px;width:186px;height:20px;background:#f0f0ee"></div>
<div class="abs" style="left:815px;top:183px;width:186px;height:1px;background:#a0a0a0"></div>
<div class="t" style="left:820px;top:165.84px;font-size:12px;color:#000;transform:scaleX(0.9088);font-weight:700">Actions</div>
<div class="abs" style="left:815px;top:184px;width:186px;height:26px;background:linear-gradient(#b8d0e6,#a9c3dc 50%,#86a3c6)"></div>
<div class="t" style="left:822px;top:190.63px;font-size:15.5px;color:#0a1530;transform:scaleX(0.8398)">Users</div>
<svg class="abs" style="left:985px;top:194.8px" width="9.4" height="6" viewBox="0 0 9.4 6"><path d="M0 6 L4.7 0 L9.4 6z" fill="#000"/></svg>
<div class="t" style="left:846.4px;top:213.84px;font-size:12px;color:#000;transform:scaleX(1.0090)">More Actions</div>
<svg class="abs" style="left:988px;top:217.3px" width="5" height="8.8" viewBox="0 0 5 8.8"><path d="M0 0 L5 4.4 L0 8.8z" fill="#000"/></svg>
<div class="abs" style="left:27px;top:754px;width:976px;height:23px;background:#f0f0f0"></div>
<div class="abs" style="left:782px;top:756px;width:1px;height:20px;background:#d0d0d0"></div>
<div class="abs" style="left:783px;top:756px;width:1px;height:20px;background:#fcfcfc"></div>
<div class="abs" style="left:915px;top:756px;width:1px;height:20px;background:#d0d0d0"></div>
<div class="abs" style="left:916px;top:756px;width:1px;height:20px;background:#fcfcfc"></div>
<div class="abs" style="left:1000px;top:756px;width:1px;height:20px;background:#d0d0d0"></div>
<div class="abs" style="left:1001px;top:756px;width:1px;height:20px;background:#fcfcfc"></div>
</body>
</html>
